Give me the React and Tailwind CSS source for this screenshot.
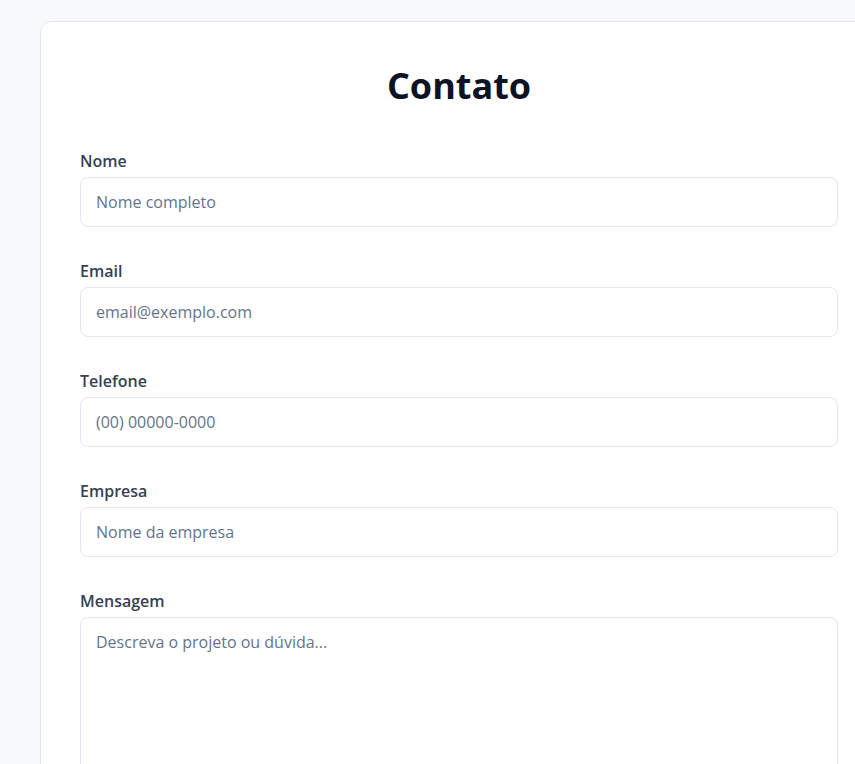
const fields = [
  { label: 'Nome', placeholder: 'Nome completo', type: 'text' },
  { label: 'Email', placeholder: 'email@exemplo.com', type: 'email' },
  { label: 'Telefone', placeholder: '(00) 00000-0000', type: 'tel' },
  { label: 'Empresa', placeholder: 'Nome da empresa', type: 'text' },
];

export default function App() {
  return (
    <div
      className="w-screen h-screen overflow-hidden bg-[#f8f9fb] pt-[21px] pl-10"
      style={{ fontFamily: '"Open Sans", "Noto Sans", sans-serif' }}
    >
      <div className="w-[838px] bg-white border border-[#e5e7eb] rounded-xl px-[39px] pt-[39px] pb-10">
        <h1 className="text-center text-4xl font-bold text-[#0b1324] mt-[5px] mb-[43px]">Contato</h1>

        <form className="flex flex-col gap-8">
          {fields.map((f) => (
            <div key={f.label}>
              <label className="block text-base font-semibold text-[#374151] mb-1">{f.label}</label>
              <input
                type={f.type}
                placeholder={f.placeholder}
                className="w-full h-[50px] px-[15px] text-base border border-[#e2e8f0] rounded-lg placeholder:text-[#64748b] outline-none"
              />
            </div>
          ))}
          <div>
            <label className="block text-base font-semibold text-[#374151] mb-1">Mensagem</label>
            <textarea
              rows={6}
              placeholder="Descreva o projeto ou dúvida..."
              className="w-full h-[180px] px-[15px] py-3 text-base border border-[#e2e8f0] rounded-lg placeholder:text-[#64748b] outline-none resize-y"
            />
          </div>
        </form>
      </div>
    </div>
  );
}
